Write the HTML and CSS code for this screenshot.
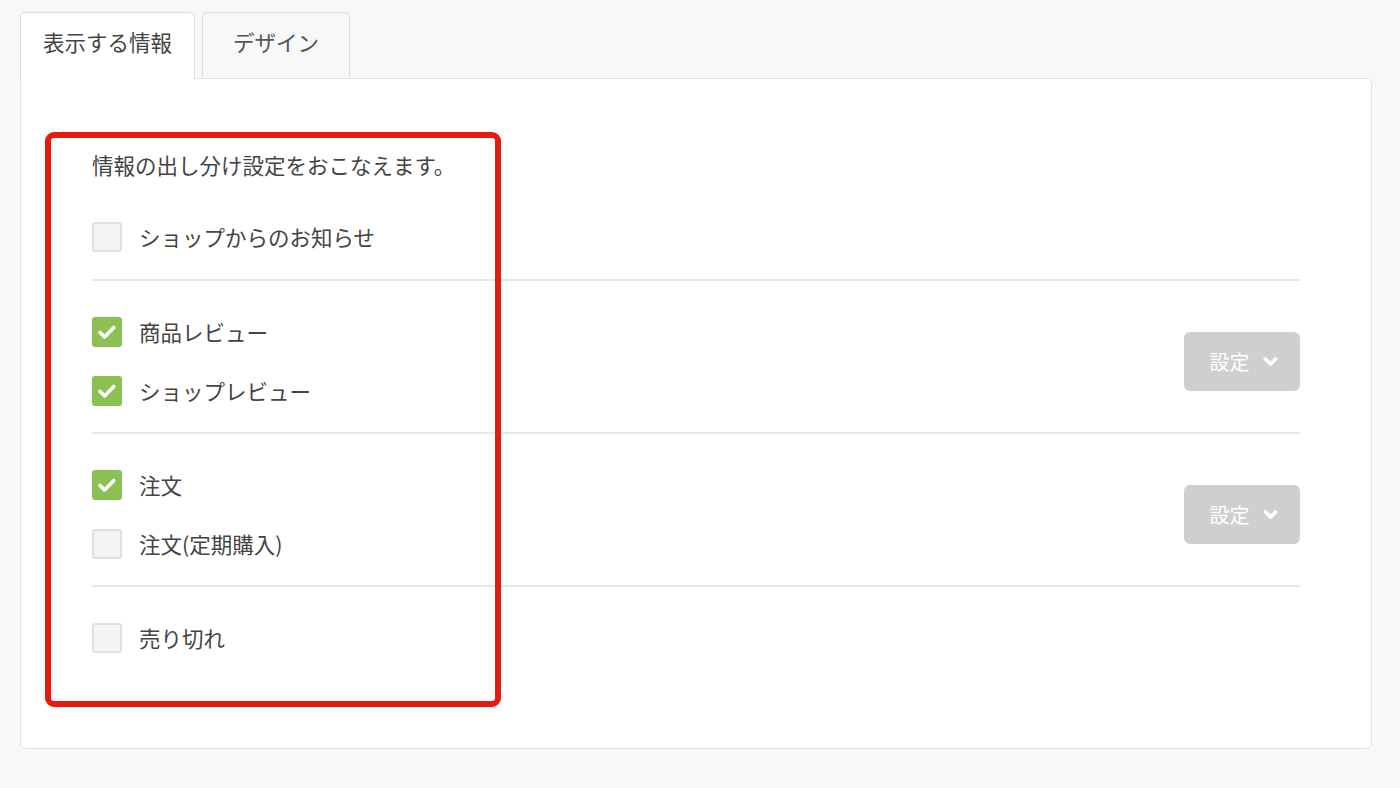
FILE: index.html
```html
<!DOCTYPE html>
<html lang="ja">
<head>
    <meta charset="UTF-8">
    <meta name="viewport" content="width=device-width, initial-scale=1.0">
    <title>表示する情報</title>
    <link rel="stylesheet" href="styles.css">
</head>
<body>
    <div class="tabs">
        <div class="tab active">表示する情報</div>
        <div class="tab">デザイン</div>
    </div>
    <div class="panel">
        <div class="highlight"></div>

        <section class="group intro">
            <p class="desc">情報の出し分け設定をおこなえます。</p>
            <div class="options">
                <label class="option"><span class="check"></span>ショップからのお知らせ</label>
            </div>
        </section>

        <section class="group">
            <div class="options">
                <label class="option"><span class="check on"><svg viewBox="0 0 30 30"><path d="M8 15.5l4.6 4.4 9.2-9.4"/></svg></span>商品レビュー</label>
                <label class="option"><span class="check on"><svg viewBox="0 0 30 30"><path d="M8 15.5l4.6 4.4 9.2-9.4"/></svg></span>ショップレビュー</label>
            </div>
            <button class="btn">設定 <svg viewBox="0 0 20 20"><path d="M4 7l6 6 6-6"/></svg></button>
        </section>

        <section class="group">
            <div class="options">
                <label class="option"><span class="check on"><svg viewBox="0 0 30 30"><path d="M8 15.5l4.6 4.4 9.2-9.4"/></svg></span>注文</label>
                <label class="option"><span class="check"></span>注文(定期購入)</label>
            </div>
            <button class="btn">設定 <svg viewBox="0 0 20 20"><path d="M4 7l6 6 6-6"/></svg></button>
        </section>

        <section class="group">
            <div class="options">
                <label class="option"><span class="check"></span>売り切れ</label>
            </div>
        </section>
    </div>
</body>
</html>
```

FILE: styles.css
```css
body {
    margin: 0;
    padding: 12px 28px 0 20px;
    background-color: #f7f8fa;
    font-family: "Noto Sans CJK JP", sans-serif;
    font-size: 21.5px;
    color: #444;
}
.tabs {
    display: flex;
    gap: 7px;
    margin-bottom: -1px;
    position: relative;
    z-index: 1;
}
.tab {
    height: 65px;
    line-height: 58px;
    padding: 0 30px;
    border: 1px solid #dcdcdc;
    border-bottom: none;
    border-radius: 5px 5px 0 0;
    background-color: #f7f8fa;
    color: #555;
}
.tab.active {
    height: 66px;
    padding: 0 22px;
    background-color: #fff;
    color: #444;
}
.panel {
    position: relative;
    background-color: #fff;
    border: 1px solid #e2e2e2;
    border-radius: 0 6px 6px 6px;
    padding: 71px 71px 69px;
}
.highlight {
    position: absolute;
    left: 24px;
    top: 53px;
    width: 456px;
    height: 575px;
    box-sizing: border-box;
    border: 6px solid #e8190f;
    border-radius: 9px;
}
.group {
    display: flex;
    align-items: center;
    justify-content: space-between;
    padding: 36px 0 26px;
    border-top: 2px solid #e8e8e8;
}
.group.intro {
    display: block;
    padding: 0 0 27px;
    border-top: none;
}
.desc {
    margin: 0 0 42px;
    line-height: 30px;
}
.options {
    display: flex;
    flex-direction: column;
    gap: 29px;
}
.option {
    display: flex;
    align-items: center;
    gap: 17px;
    height: 30px;
    line-height: 28px;
}
.check {
    width: 30px;
    height: 30px;
    box-sizing: border-box;
    border: 2px solid #e0e0e0;
    border-radius: 3px;
    background-color: #f4f4f4;
    display: flex;
    align-items: center;
    justify-content: center;
}
.check.on {
    border-color: #8bc152;
    background-color: #8bc152;
}
.check svg {
    width: 30px;
    height: 30px;
    flex-shrink: 0;
    fill: none;
    stroke: #fff;
    stroke-width: 3.6;
    stroke-linecap: round;
    stroke-linejoin: round;
}
.btn {
    width: 116px;
    height: 59px;
    border: none;
    border-radius: 6px;
    background-color: #cfcfcf;
    color: #fff;
    font-family: inherit;
    font-size: 20px;
    display: flex;
    align-items: center;
    justify-content: center;
    gap: 12px;
    padding: 0 0 0 4px;
}
.btn svg {
    width: 17px;
    height: 17px;
    fill: none;
    stroke: #fff;
    stroke-width: 4.4;
    stroke-linecap: round;
    stroke-linejoin: round;
}
```
